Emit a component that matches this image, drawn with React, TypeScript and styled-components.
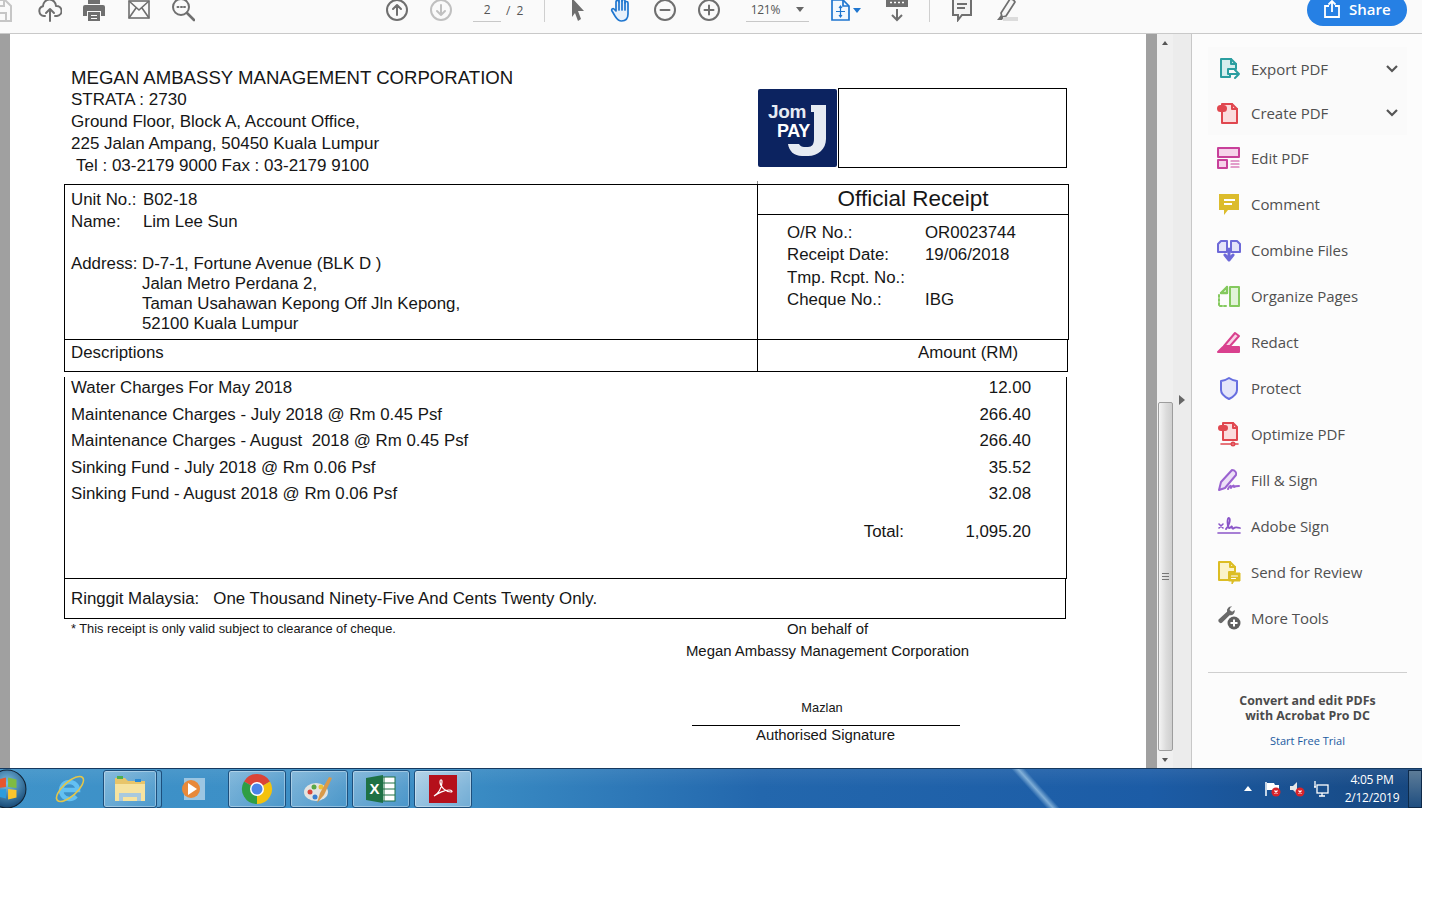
import React from 'react';
import styled, { createGlobalStyle } from 'styled-components';

const GlobalStyle = createGlobalStyle`
  html, body {
    margin: 0;
    background: #fff;
    overflow: hidden;
  }
  * { box-sizing: border-box; }
`;

const Window = styled.div`
  width: 1422px;
  height: 808px;
  display: flex;
  flex-direction: column;
  overflow: hidden;
`;

/* ---------- toolbar ---------- */

const Toolbar = styled.header`
  height: 34px;
  flex: none;
  display: flex;
  align-items: center;
  padding-bottom: 13px;
  background: #fafafa;
  border-bottom: 1px solid #c9c9c9;
`;

const Slot = styled.div<{ $w?: number; $ml?: number }>`
  flex: none;
  width: ${(p) => p.$w ?? 44}px;
  margin-left: ${(p) => p.$ml ?? 0}px;
  display: flex;
  align-items: center;
  justify-content: center;
  gap: 3px;
`;

const FieldBox = styled.div<{ $w: number; $ml: number }>`
  flex: none;
  width: ${(p) => p.$w}px;
  margin-left: ${(p) => p.$ml}px;
  height: 24px;
  display: flex;
  align-items: center;
  justify-content: center;
  gap: 16px;
  font: 12px 'Open Sans', sans-serif;
  letter-spacing: -0.3px;
  color: #555;
  border-bottom: 1px solid #c8c8c8;
`;

const PageTotal = styled.span`
  flex: none;
  margin-left: 5px;
  font: 12px 'Open Sans', sans-serif;
  letter-spacing: 1.5px;
  color: #555;
`;

const ToolDivider = styled.div<{ $ml: number }>`
  flex: none;
  width: 1px;
  height: 24px;
  margin-left: ${(p) => p.$ml}px;
  background: #cfcfcf;
`;

const Caret = styled.span<{ $c?: string }>`
  display: block;
  flex: none;
  width: 0;
  height: 0;
  border-left: 4px solid transparent;
  border-right: 4px solid transparent;
  border-top: 5px solid ${(p) => p.$c ?? '#666'};
`;

const ShareButton = styled.button`
  flex: none;
  margin-left: 279px;
  width: 100px;
  height: 32px;
  padding: 0 0 2px;
  border: 0;
  border-radius: 16px;
  background: #2680e4;
  color: #fff;
  display: flex;
  align-items: center;
  justify-content: center;
  gap: 8px;
  font: 600 15px 'Open Sans', sans-serif;
`;

/* ---------- main ---------- */

const Main = styled.div`
  flex: 1;
  min-height: 0;
  display: flex;
`;

const DocPane = styled.main`
  width: 1157px;
  flex: none;
  background: #fff;
  border-left: 10px solid #a0a0a0;
  border-right: 11px solid #a0a0a0;
  padding-left: 54px;
  color: #161616;
  font: 16.85px/22px 'Liberation Sans', Arial, sans-serif;
  overflow: hidden;
`;

const Sheet = styled.div`
  width: 1005px;
`;

const HeadRow = styled.section`
  height: 150px;
  display: grid;
  grid-template-columns: 694px 80px 229px;
  align-items: start;
`;

const Letterhead = styled.div`
  padding: 33px 0 0 7px;
  white-space: nowrap;
  font-size: 17px;
`;

const CompanyName = styled.div`
  font-size: 18.6px;
`;

const HeadLine = styled.div<{ $indent?: number }>`
  padding-left: ${(p) => p.$indent ?? 0}px;
`;

const LogoTile = styled.div`
  margin-top: 55px;
  width: 79px;
  height: 78px;
  background: #0c2360;
  border-radius: 2px;
`;

const BlankBox = styled.div`
  margin-top: 54px;
  height: 80px;
  border: 1px solid #000;
`;

const InfoRow = styled.section`
  height: 156px;
  display: grid;
  grid-template-columns: 693px 312px;
`;

const BillTo = styled.div`
  border: 1px solid #000;
  border-right: 0;
  padding: 4px 0 0 6px;
  white-space: nowrap;
`;

const BillLine = styled.div<{ $h?: number; $col?: number }>`
  display: grid;
  grid-template-columns: ${(p) => p.$col ?? 71}px 1fr;
  line-height: ${(p) => p.$h ?? 22}px;
`;

const Gap = styled.div`
  height: 21px;
`;

const ReceiptCell = styled.div`
  position: relative;
  border: 1px solid #000;
  &::before {
    content: '';
    position: absolute;
    left: -1px;
    top: -4px;
    width: 1px;
    height: 3px;
    background: #8a8a8a;
  }
`;

const ReceiptTitle = styled.h1`
  margin: 0;
  height: 30px;
  border-bottom: 1px solid #000;
  font: 400 22.5px/28px 'Liberation Sans', Arial, sans-serif;
  text-align: center;
`;

const ReceiptGrid = styled.dl`
  margin: 7px 0 0 29px;
  display: grid;
  grid-template-columns: 138px 1fr;
  grid-auto-rows: 22.3px;
  dt, dd { margin: 0; }
`;

const DescHead = styled.section`
  height: 32px;
  display: grid;
  grid-template-columns: 693px 311px;
  line-height: 26px;
`;

const DescCell = styled.div`
  padding-left: 6px;
  border: 1px solid #000;
  border-top: 0;
  border-right: 0;
`;

const AmountCell = styled.div`
  padding-left: 160px;
  border: 1px solid #000;
  border-top: 0;
`;

const ItemsBox = styled.section`
  margin-top: 5px;
  width: 1003px;
  height: 202px;
  padding: 0 35px 0 6px;
  border: 1px solid #000;
  border-top: 0;
`;

const ItemRow = styled.div`
  height: 26.6px;
  line-height: 21.6px;
  display: flex;
  justify-content: space-between;
  white-space: pre;
`;

const TotalRow = styled.div`
  margin-top: 11px;
  display: flex;
  justify-content: flex-end;
  line-height: 22px;
`;

const TotalAmount = styled.span`
  width: 127px;
  text-align: right;
`;

const WordsBox = styled.section`
  width: 1002px;
  height: 40px;
  padding-left: 6px;
  border: 1px solid #000;
  border-top: 0;
  line-height: 39px;
`;

const SignRow = styled.section`
  display: grid;
  grid-template-columns: 612px 300px;
  font-size: 14.9px;
  line-height: 20px;
`;

const Note = styled.div`
  padding-left: 7px;
  font-size: 12.8px;
  white-space: nowrap;
`;

const SignBlock = styled.div`
  display: flex;
  flex-direction: column;
  align-items: center;
  white-space: nowrap;
`;

const SignText = styled.div<{ $mt?: number }>`
  margin-top: ${(p) => p.$mt ?? 0}px;
  padding-left: 3px;
`;

const SignName = styled.div`
  margin-top: 36px;
  font-size: 12.8px;
  line-height: 22px;
  padding-right: 8px;
`;

const SignLine = styled.div`
  width: 268px;
  height: 1px;
  margin-top: 6px;
  background: #000;
`;

const SignLabel = styled.div`
  margin-top: -1px;
  padding-right: 1px;
`;

/* ---------- scrollbar + gutter ---------- */

const ScrollBar = styled.div`
  width: 16px;
  flex: none;
  background: #f0f0f0;
  display: flex;
  flex-direction: column;
  align-items: center;
`;

const ScrollArrow = styled.span<{ $up?: boolean }>`
  flex: none;
  margin-top: 7px;
  width: 0;
  height: 0;
  border-left: 3px solid transparent;
  border-right: 3px solid transparent;
  ${(p) => (p.$up ? 'border-bottom: 4px solid #555;' : 'border-top: 4px solid #555;')}
`;

const ScrollThumb = styled.div`
  margin-top: 357px;
  width: 15px;
  height: 349px;
  flex: none;
  border: 1px solid #9d9d9d;
  border-radius: 2px;
  background: linear-gradient(90deg, #f4f4f4, #dcdcdc 55%, #cfcfcf);
  display: flex;
  align-items: center;
  justify-content: center;
`;

const Grip = styled.span`
  width: 7px;
  height: 7px;
  background: repeating-linear-gradient(180deg, #777 0 1px, transparent 1px 3px);
`;

const Gutter = styled.div`
  width: 19px;
  flex: none;
  background: #ececec;
  border-right: 1px solid #c8c8c8;
  display: flex;
  justify-content: center;
  padding-top: 361px;
`;

const GutterArrow = styled.span`
  width: 0;
  height: 0;
  border-top: 5px solid transparent;
  border-bottom: 5px solid transparent;
  border-left: 6px solid #666;
`;

/* ---------- tools panel ---------- */

const Panel = styled.aside`
  flex: 1;
  background: #fcfcfc;
  padding: 13px 15px 0 16px;
  font-family: 'Open Sans', sans-serif;
  color: #505050;
`;

const ToolRow = styled.div<{ $tinted?: boolean }>`
  height: ${(p) => (p.$tinted ? 44 : 46)}px;
  display: flex;
  align-items: center;
  padding-left: 8px;
  gap: 9px;
  font-size: 15px;
  letter-spacing: -0.05px;
  background: ${(p) => (p.$tinted ? '#fafafa' : 'transparent')};
`;

const ToolLabel = styled.span`
  flex: 1;
`;

const Chevron = styled.svg`
  margin-right: 9px;
`;

const PanelRule = styled.div`
  height: 1px;
  margin-top: 31px;
  background: #cfcfcf;
`;

const Promo = styled.div`
  margin-top: 20px;
  text-align: center;
  font-weight: 700;
  font-size: 12.4px;
  line-height: 15px;
  color: #4b4b4b;
`;

const TrialLink = styled.a`
  display: block;
  margin-top: 10px;
  font-weight: 400;
  font-size: 11px;
  color: #1a5aa0;
`;

/* ---------- taskbar ---------- */

const Taskbar = styled.footer`
  height: 40px;
  flex: none;
  position: relative;
  overflow: hidden;
  display: flex;
  align-items: center;
  border-top: 1px solid #16395f;
  background:
    linear-gradient(180deg, rgba(255, 255, 255, 0.07), rgba(255, 255, 255, 0) 45%),
    linear-gradient(90deg, #3f93c9 0, #3a8cc4 470px, #2367ad 760px, #1c5ca6 1150px, #17477f 1422px);
  &::before {
    content: '';
    position: absolute;
    left: 1029px;
    top: -4px;
    width: 14px;
    height: 48px;
    background: linear-gradient(90deg, transparent, rgba(190, 225, 245, 0.6), transparent);
    transform: skewX(42deg);
  }
`;

const TaskButton = styled.div<{ $w?: number; $ml?: number; $on?: boolean; $bare?: boolean }>`
  flex: none;
  position: relative;
  width: ${(p) => p.$w ?? 58}px;
  height: 38px;
  margin-left: ${(p) => p.$ml ?? 4}px;
  display: flex;
  align-items: center;
  justify-content: center;
  ${(p) =>
    p.$bare
      ? ''
      : `border: 1px solid #1d4f7c;
         border-radius: 3px;
         box-shadow: inset 0 0 0 1px rgba(255,255,255,.35);
         background: linear-gradient(135deg, rgba(255,255,255,${p.$on ? 0.6 : 0.35}), rgba(255,255,255,${p.$on ? 0.28 : 0.08}));`}
`;

const StackEdge = styled.div`
  flex: none;
  width: 5px;
  height: 38px;
  border: 1px solid #1d4f7c;
  border-left: 0;
  border-radius: 0 3px 3px 0;
  background: rgba(255, 255, 255, 0.15);
`;

const Tray = styled.div`
  position: relative;
  margin-left: auto;
  display: flex;
  align-items: center;
  color: #fff;
`;

const TrayIcon = styled.div<{ $w: number }>`
  width: ${(p) => p.$w}px;
  display: flex;
  justify-content: center;
`;

const Clock = styled.div`
  width: 72px;
  margin-left: 3px;
  text-align: center;
  font: 12px/18px 'Open Sans', sans-serif;
  letter-spacing: -0.25px;
`;

const ShowDesktop = styled.div`
  width: 14px;
  height: 38px;
  border: 1px solid #0e2a4a;
  background: linear-gradient(180deg, #5d7c98, #1f4e80);
`;

const tool = '#6f6f6f';

const ToolSvg = ({ children }: { children: React.ReactNode }) => (
  <svg width="24" height="24" viewBox="0 0 24 24" fill="none" stroke={tool} strokeWidth="2" strokeLinecap="round" strokeLinejoin="round">
    {children}
  </svg>
);

const Circled = ({ d, color = tool }: { d: string; color?: string }) => (
  <svg width="24" height="24" viewBox="0 0 24 24" fill="none" stroke={color} strokeWidth="2" strokeLinecap="round" strokeLinejoin="round">
    <circle cx="12" cy="12" r="10" />
    <path d={d} />
  </svg>
);

const sideIcon = (color: string, body: React.ReactNode) => (
  <svg width="26" height="26" viewBox="0 0 26 26" fill="none" stroke={color} strokeWidth="2" strokeLinejoin="round" strokeLinecap="round">
    {body}
  </svg>
);

const SIDE_TOOLS: { label: string; icon: React.ReactNode; more?: boolean }[] = [
  {
    label: 'Export PDF',
    more: true,
    icon: sideIcon(
      '#2b9ea0',
      <>
        <path d="M5 3h10l5 5v5H12v5h2v3H5z" fill="#d6eeee" />
        <path d="M15 3v5h5" />
        <path d="M14 18h9M19 14l4 4-4 4" />
      </>,
    ),
  },
  {
    label: 'Create PDF',
    more: true,
    icon: sideIcon(
      '#e0474f',
      <>
        <path d="M6 10V4h10l5 5v14H6z" fill="#fbdcdd" />
        <path d="M16 4v5h5" />
        <rect x="2" y="6" width="8" height="5" rx="2.5" fill="#e0474f" />
      </>,
    ),
  },
  {
    label: 'Edit PDF',
    icon: sideIcon(
      '#c8409a',
      <>
        <rect x="2" y="3" width="21" height="9" fill="#f6d2ea" />
        <rect x="2" y="15" width="9" height="8" fill="#f6d2ea" />
        <path strokeWidth="1.2" d="M15 16h8M15 19h8M15 22h8" />
      </>,
    ),
  },
  {
    label: 'Comment',
    icon: (
      <svg width="26" height="26" viewBox="0 0 26 26">
        <path d="M3 3h20v16H12l-4 5v-5H3z" fill="#dcbc2c" />
        <path d="M8 9h11M8 13h8" stroke="#fff" strokeWidth="2" />
      </svg>
    ),
  },
  {
    label: 'Combine Files',
    icon: sideIcon(
      '#6d69d8',
      <>
        <path d="M2 7l3-3h6v11H2zM15 4h6l3 3v8h-9z" fill="#e4e3f9" />
        <path d="M13 12v10M9 18l4 5 4-5" strokeWidth="3" />
      </>,
    ),
  },
  {
    label: 'Organize Pages',
    icon: sideIcon(
      '#84c95e',
      <>
        <rect x="14" y="4" width="9" height="19" fill="#e2f3d8" />
        <path d="M3 12v11h8" strokeDasharray="2 2" />
        <path d="M11 4v6H5M5 10l6-6" strokeWidth="2.4" />
      </>,
    ),
  },
  {
    label: 'Redact',
    icon: sideIcon(
      '#d9408e',
      <>
        <path d="M8 17l11-13 4 3-9 10z" fill="#f9d3e6" />
        <path d="M2 23l5-5h16v5z" fill="#d9408e" />
      </>,
    ),
  },
  {
    label: 'Protect',
    icon: sideIcon('#666ee0', <path d="M13 3c3 2 5 3 8 3v9c0 4-4 7-8 9-4-2-8-5-8-9V6c3 0 5-1 8-3z" fill="#e3e5fa" />),
  },
  {
    label: 'Optimize PDF',
    icon: sideIcon(
      '#e0474f',
      <>
        <path d="M7 8V2h10l4 4v13H7z" fill="#fbdcdd" />
        <path d="M17 2v5h4" />
        <rect x="3" y="5" width="8" height="4" rx="2" fill="#e0474f" />
        <path strokeWidth="1.6" d="M5 23h10M19 23h3" />
        <circle cx="17" cy="23" r="1.5" />
      </>,
    ),
  },
  {
    label: 'Fill & Sign',
    icon: sideIcon(
      '#9a62d0',
      <>
        <path d="M3 23l2-8L16 3c3 0 5 3 4 5L9 21z" fill="#ecdff7" />
        <path d="M12 22c2-4 3-4 3-1 2-3 3-3 3-1 1-1 3-1 5-1" />
      </>,
    ),
  },
  {
    label: 'Adobe Sign',
    icon: sideIcon(
      '#8a55c8',
      <>
        <path d="M3 11l4 4M7 11l-4 4" strokeWidth="1.6" />
        <path d="M10 16c3-3 5-10 3-11-2 0-2 8 0 10 1 1 3-3 3-1s1 2 2 1 2-1 6 0" strokeWidth="1.8" />
        <path d="M2 20h22" strokeWidth="1.6" />
      </>,
    ),
  },
  {
    label: 'Send for Review',
    icon: sideIcon(
      '#dcbd24',
      <>
        <path d="M3 3h11l5 5v5h-6v8H3z" fill="#fbf3c9" />
        <path d="M14 3v5h5" />
        <path d="M13 14h11v8h-6l-2 3v-3h-3z" fill="#dcbd24" strokeWidth="1" />
        <path d="M15.5 17h6M15.5 19.5h4" stroke="#fff" strokeWidth="1.2" />
      </>,
    ),
  },
  {
    label: 'More Tools',
    icon: (
      <svg width="26" height="26" viewBox="0 0 26 26">
        <path d="M19 2a5 5 0 0 0-6 6L3 17a3 3 0 0 0 4 4l9-9a5 5 0 0 0 6-6l-3 2-3-2 1-3z" fill="#6a6a6a" transform="scale(.85)" />
        <circle cx="18" cy="18" r="6.5" fill="#606060" />
        <path d="M18 14.5v7M14.5 18h7" stroke="#fff" strokeWidth="2" />
      </svg>
    ),
  },
];

const ITEMS = [
  ['Water Charges For May 2018', '12.00'],
  ['Maintenance Charges - July 2018 @ Rm 0.45 Psf', '266.40'],
  ['Maintenance Charges - August  2018 @ Rm 0.45 Psf', '266.40'],
  ['Sinking Fund - July 2018 @ Rm 0.06 Psf', '35.52'],
  ['Sinking Fund - August 2018 @ Rm 0.06 Psf', '32.08'],
];

const JomPayLogo = () => (
  <svg width="79" height="78" viewBox="0 0 79 78">
    <path d="M53 16H68V50C68 60 60 67 50 67H44C36 67 31 62 30 55H41C42 57 44 58 46 58H50C54 58 56 55 56 50V23H53Z" fill="#e6ebf3" />
    <text x="10" y="29" fill="#e6ebf3" fontFamily="Liberation Sans, sans-serif" fontWeight="700" fontSize="19" letterSpacing="-0.3">
      Jom
    </text>
    <text x="19" y="48" fill="#fff" fontFamily="Liberation Sans, sans-serif" fontWeight="700" fontSize="18" letterSpacing="-0.4">
      PAY
    </text>
  </svg>
);

export default function App() {
  return (
    <Window>
      <GlobalStyle />
      <Toolbar>
        <Slot $w={24} $ml={-12}>
          <svg width="24" height="24" viewBox="0 0 24 24" fill="none" stroke="#c6c6c6" strokeWidth="2">
            <path d="M1 2h16l6 6v15H1z" />
            <path d="M7 2v6h9V2M6 23v-8h12v8" />
          </svg>
        </Slot>
        <Slot $ml={16}>
          <ToolSvg>
            <path d="M7 18H6a5 5 0 0 1-1-9.8A6.5 6.5 0 0 1 18 8a5 5 0 0 1 1 10h-2" />
            <path d="M12 23V11M8 15l4-4 4 4" />
          </ToolSvg>
        </Slot>
        <Slot>
          <svg width="24" height="24" viewBox="0 0 24 24" fill={tool}>
            <path d="M6 0h12v6H6z" />
            <path d="M3 7h18a2 2 0 0 1 2 2v9h-4v-5H5v5H1V9a2 2 0 0 1 2-2z" />
            <path d="M6 14h12v9H6zM9 17v1h6v-1zM9 20v1h6v-1z" fillRule="evenodd" />
          </svg>
        </Slot>
        <Slot $ml={1}>
          <svg width="24" height="24" viewBox="0 0 24 24" fill="none" stroke={tool} strokeWidth="1.6">
            <rect x="2" y="3" width="20" height="17" />
            <path d="M2 3l10 9 10-9M2 20l7-10M22 20l-7-10" />
          </svg>
        </Slot>
        <Slot>
          <svg width="24" height="24" viewBox="0 0 24 24" fill="none" stroke={tool} strokeWidth="2" strokeLinecap="round">
            <circle cx="10" cy="9" r="8" />
            <path d="M16 15l7 7" strokeWidth="2.6" />
            <path d="M6.5 9h1M10 9h1M13 9h1" />
          </svg>
        </Slot>
        <Slot $ml={170}>
          <Circled d="M12 17V7M8 11l4-4 4 4" />
        </Slot>
        <Slot>
          <Circled color="#c0c0c0" d="M12 7v10M8 13l4 4 4-4" />
        </Slot>
        <FieldBox $w={28} $ml={10}>2</FieldBox>
        <PageTotal>/ 2</PageTotal>
        <ToolDivider $ml={19} />
        <Slot $ml={10}>
          <svg width="24" height="24" viewBox="0 0 24 24" fill={tool}>
            <path d="M7 0l12 13h-6l3 8-3 2-3-8-3 4z" />
          </svg>
        </Slot>
        <Slot>
          <svg width="24" height="24" viewBox="0 0 24 24" fill="#e8f1fb" stroke="#1f76cf" strokeWidth="1.7" strokeLinecap="round" strokeLinejoin="round">
            <path d="M7 13V4a1.5 1.5 0 0 1 3 0V2.5a1.5 1.5 0 0 1 3 0V3a1.5 1.5 0 0 1 3 0v2a1.5 1.5 0 0 1 3 0v11c0 5-3 7-6.5 7S8 21 6 18l-3-5c-1-2 1-3 2-2z" />
            <path d="M10 4v8M13 3v9M16 4v8" />
          </svg>
        </Slot>
        <Slot>
          <Circled d="M7.5 12h9" />
        </Slot>
        <Slot>
          <Circled d="M7.5 12h9M12 7.5v9" />
        </Slot>
        <FieldBox $w={63} $ml={15}>
          <span>121%</span>
          <Caret />
        </FieldBox>
        <Slot $ml={15}>
          <svg width="19" height="22" viewBox="0 0 19 22" fill="none" stroke="#1f76cf" strokeWidth="1.7">
            <path d="M1 1h11l6 6v14H1z" fill="#f2f8fe" />
            <path d="M12 1v6h6" />
            <path d="M9.5 7v11M5 12.5h9M8 9l1.5-2L11 9M8 16l1.5 2 1.500-2" strokeWidth="1.2" />
          </svg>
          <Caret $c="#1f76cf" />
        </Slot>
        <Slot $ml={7}>
          <svg width="24" height="24" viewBox="0 0 24 24" fill="none" stroke={tool} strokeWidth="2">
            <rect x="2" y="1" width="20" height="7" fill={tool} />
            <path d="M12 11v11M7 17l5 5 5-5" />
            <path d="M5 4.5h2M9 4.5h2M13 4.5h2M17 4.5h2" stroke="#fff" strokeWidth="1.5" />
          </svg>
        </Slot>
        <ToolDivider $ml={10} />
        <Slot $ml={10}>
          <svg width="24" height="24" viewBox="0 0 24 24" fill="#f4f4f4" stroke={tool} strokeWidth="2">
            <path d="M3 1h18v16h-9l-4 5v-5H3z" />
            <path d="M7 6h10M7 10h8" />
          </svg>
        </Slot>
        <Slot>
          <svg width="24" height="24" viewBox="0 0 24 24" fill="#f7f7f7" stroke={tool} strokeWidth="1.7" strokeLinejoin="round">
            <path d="M7 15L16 1c2 0 4 1 5 3L12 18l-4 1z" />
            <path d="M7 17l3 2-2 3H3z" fill={tool} stroke="none" />
            <rect x="9" y="19" width="15" height="4" fill="#dcdcdc" stroke="none" />
          </svg>
        </Slot>
        <ShareButton>
          <svg width="18" height="18" viewBox="0 0 18 18" fill="none" stroke="#fff" strokeWidth="1.8">
            <path d="M6 6H2v11h14V6h-4M9 12V1M5.5 4.5L9 1l3.5 3.5" />
          </svg>
          Share
        </ShareButton>
      </Toolbar>

      <Main>
        <DocPane>
          <Sheet>
            <HeadRow>
              <Letterhead>
                <CompanyName>MEGAN AMBASSY MANAGEMENT CORPORATION</CompanyName>
                <HeadLine>STRATA : 2730</HeadLine>
                <HeadLine>Ground Floor, Block A, Account Office,</HeadLine>
                <HeadLine>225 Jalan Ampang, 50450 Kuala Lumpur</HeadLine>
                <HeadLine $indent={5}>Tel : 03-2179 9000 Fax : 03-2179 9100</HeadLine>
              </Letterhead>
              <LogoTile>
                <JomPayLogo />
              </LogoTile>
              <BlankBox />
            </HeadRow>

            <InfoRow>
              <BillTo>
                <BillLine $col={72}>
                  <span>Unit No.:</span>
                  <span>B02-18</span>
                </BillLine>
                <BillLine $col={72}>
                  <span>Name:</span>
                  <span>Lim Lee Sun</span>
                </BillLine>
                <Gap />
                <BillLine $h={20}>
                  <span>Address:</span>
                  <span>D-7-1, Fortune Avenue (BLK D )</span>
                </BillLine>
                <BillLine $h={20}>
                  <span />
                  <span>Jalan Metro Perdana 2,</span>
                </BillLine>
                <BillLine $h={20}>
                  <span />
                  <span>Taman Usahawan Kepong Off Jln Kepong,</span>
                </BillLine>
                <BillLine $h={19}>
                  <span />
                  <span>52100 Kuala Lumpur</span>
                </BillLine>
              </BillTo>
              <ReceiptCell>
                <ReceiptTitle>Official Receipt</ReceiptTitle>
                <ReceiptGrid>
                  <dt>O/R No.:</dt>
                  <dd>OR0023744</dd>
                  <dt>Receipt Date:</dt>
                  <dd>19/06/2018</dd>
                  <dt>Tmp. Rcpt. No.:</dt>
                  <dd />
                  <dt>Cheque No.:</dt>
                  <dd>IBG</dd>
                </ReceiptGrid>
              </ReceiptCell>
            </InfoRow>

            <DescHead>
              <DescCell>Descriptions</DescCell>
              <AmountCell>Amount (RM)</AmountCell>
            </DescHead>

            <ItemsBox>
              {ITEMS.map(([name, amount]) => (
                <ItemRow key={name}>
                  <span>{name}</span>
                  <span>{amount}</span>
                </ItemRow>
              ))}
              <TotalRow>
                <span>Total:</span>
                <TotalAmount>1,095.20</TotalAmount>
              </TotalRow>
            </ItemsBox>

            <WordsBox>Ringgit Malaysia:&nbsp;&nbsp; One Thousand Ninety-Five And Cents Twenty Only.</WordsBox>

            <SignRow>
              <Note>* This receipt is only valid subject to clearance of cheque.</Note>
              <SignBlock>
                <SignText>On behalf of</SignText>
                <SignText $mt={2}>Megan Ambassy Management Corporation</SignText>
                <SignName>Mazlan</SignName>
                <SignLine />
                <SignLabel>Authorised Signature</SignLabel>
              </SignBlock>
            </SignRow>
          </Sheet>
        </DocPane>

        <ScrollBar>
          <ScrollArrow $up />
          <ScrollThumb>
            <Grip />
          </ScrollThumb>
          <ScrollArrow />
        </ScrollBar>
        <Gutter>
          <GutterArrow />
        </Gutter>

        <Panel>
          {SIDE_TOOLS.map((t) => (
            <ToolRow key={t.label} $tinted={t.more}>
              {t.icon}
              <ToolLabel>{t.label}</ToolLabel>
              {t.more && (
                <Chevron width="12" height="8" viewBox="0 0 12 8" fill="none" stroke="#555" strokeWidth="2.2">
                  <path d="M1 1l5 5 5-5" />
                </Chevron>
              )}
            </ToolRow>
          ))}
          <PanelRule />
          <Promo>
            Convert and edit PDFs
            <br />
            with Acrobat Pro DC
            <TrialLink>Start Free Trial</TrialLink>
          </Promo>
        </Panel>
      </Main>

      <Taskbar>
        <TaskButton $bare $w={40} $ml={-13}>
          <svg width="40" height="40" viewBox="0 0 38 38">
            <defs>
              <radialGradient id="orb" cx="50%" cy="35%" r="70%">
                <stop offset="0" stopColor="#7cc2e8" />
                <stop offset="1" stopColor="#0e3f6c" />
              </radialGradient>
            </defs>
            <circle cx="19" cy="19" r="18" fill="url(#orb)" stroke="#123" />
            <path d="M10 10l8-2v9l-8 1z" fill="#e8552d" />
            <path d="M20 8l8 2v8l-8-1z" fill="#7fbb42" />
            <path d="M10 20l8-1v9l-8-2z" fill="#2e9cdc" />
            <path d="M20 19l8 1v7l-8 2z" fill="#fcc52c" />
          </svg>
        </TaskButton>
        <TaskButton $bare $w={38} $ml={24}>
          <svg width="34" height="34" viewBox="0 0 34 34" fill="none">
            <path d="M9 18h16a8.5 8.5 0 1 0-2 6" stroke="#63c0f2" strokeWidth="4.5" />
            <ellipse cx="17" cy="17" rx="17" ry="7" transform="rotate(-42 17 17)" stroke="#e3c64a" strokeWidth="1.6" />
          </svg>
        </TaskButton>
        <TaskButton $ml={14} $w={54}>
          <svg width="34" height="28" viewBox="0 0 34 28">
            <path d="M2 3h10l3 3h17v20H2z" fill="#e8c56a" />
            <path d="M2 9h30v17H2z" fill="#f6e3a0" />
            <rect x="4" y="1" width="6" height="3" fill="#4caf50" />
            <rect x="22" y="4" width="6" height="3" fill="#2a8ad4" />
            <path d="M6 18h22v8h-4v-4H10v4H6z" fill="#a8c9de" />
          </svg>
        </TaskButton>
        <StackEdge />
        <TaskButton $bare $w={62} $ml={0}>
          <svg width="28" height="28" viewBox="0 0 28 28">
            <rect x="5" y="3" width="21" height="22" fill="#9cc6e2" />
            <circle cx="12" cy="14" r="9" fill="#e8893a" />
            <path d="M9 8l9 6-9 6z" fill="#fff" />
          </svg>
        </TaskButton>
        <TaskButton>
          <svg width="32" height="32" viewBox="0 0 32 32">
            <path d="M16 16L3 8.5A15 15 0 0 1 29 8.5Z" fill="#db4437" />
            <path d="M16 16L3 8.5A15 15 0 0 0 16 31Z" fill="#2f9e44" />
            <path d="M16 16L29 8.5A15 15 0 0 1 16 31Z" fill="#f4c20d" />
            <circle cx="16" cy="16" r="7" fill="#fff" />
            <circle cx="16" cy="16" r="5.5" fill="#4a84e8" />
          </svg>
        </TaskButton>
        <TaskButton>
          <svg width="32" height="32" viewBox="0 0 32 32">
            <ellipse cx="13" cy="19" rx="12" ry="9" fill="#e4e4e0" />
            <circle cx="7" cy="19" r="2.5" fill="#d9453c" />
            <circle cx="11" cy="14" r="2.5" fill="#5aa845" />
            <circle cx="18" cy="14" r="2.5" fill="#e9c33a" />
            <circle cx="12" cy="24" r="2.5" fill="#3a7fd0" />
            <path d="M14 30l3-10 9-16 3 1-8 17z" fill="#d99a4a" />
          </svg>
        </TaskButton>
        <TaskButton>
          <svg width="32" height="30" viewBox="0 0 32 30">
            <rect x="14" y="3" width="16" height="24" fill="#fff" stroke="#1e7145" />
            <path d="M19 3v24M14 9h16M14 15h16M14 21h16" stroke="#1e7145" />
            <path d="M1 4l17-3v28L1 26z" fill="#1e7145" />
            <text x="4.5" y="20" fill="#fff" fontFamily="Liberation Sans, sans-serif" fontWeight="700" fontSize="15">X</text>
          </svg>
        </TaskButton>
        <TaskButton $on>
          <svg width="30" height="30" viewBox="0 0 30 30" fill="none">
            <rect x="1" y="1" width="28" height="28" fill="#b5101b" />
            <path d="M6 22c4-2 8-8 8-14 0-3-2-3-2 0 0 5 6 10 11 10 2 0 1-2-2-2-4 0-11 3-15 6z" stroke="#fff" strokeWidth="1.2" />
          </svg>
        </TaskButton>
        <Tray>
          <TrayIcon $w={26}>
            <svg width="8" height="5" viewBox="0 0 8 5"><path d="M0 5l4-5 4 5z" fill="#fff" /></svg>
          </TrayIcon>
          <TrayIcon $w={24}>
            <svg width="16" height="16" viewBox="0 0 16 16">
              <path d="M1 1v14" stroke="#fff" strokeWidth="1.5" />
              <path d="M2 2h7l1 2h4v5H2z" fill="#fff" />
              <circle cx="11" cy="11" r="4.5" fill="#d8232a" />
              <path d="M9.5 9.5l3 3M12.5 9.5l-3 3" stroke="#fff" strokeWidth="1.2" />
            </svg>
          </TrayIcon>
          <TrayIcon $w={24}>
            <svg width="16" height="16" viewBox="0 0 16 16">
              <path d="M1 5h3l4-4v12l-4-4H1z" fill="#e6e6e6" />
              <circle cx="11" cy="11" r="4.5" fill="#d8232a" />
              <path d="M9.5 9.5l3 3M12.5 9.5l-3 3" stroke="#fff" strokeWidth="1.2" />
            </svg>
          </TrayIcon>
          <TrayIcon $w={24}>
            <svg width="16" height="16" viewBox="0 0 16 16" fill="none" stroke="#fff" strokeWidth="1.3">
              <rect x="4" y="4" width="11" height="8" />
              <path d="M9 12v3M6 15h6M2 0v6M1 6h2" />
            </svg>
          </TrayIcon>
          <Clock>
            4:05 PM
            <br />
            2/12/2019
          </Clock>
          <ShowDesktop />
        </Tray>
      </Taskbar>
    </Window>
  );
}
